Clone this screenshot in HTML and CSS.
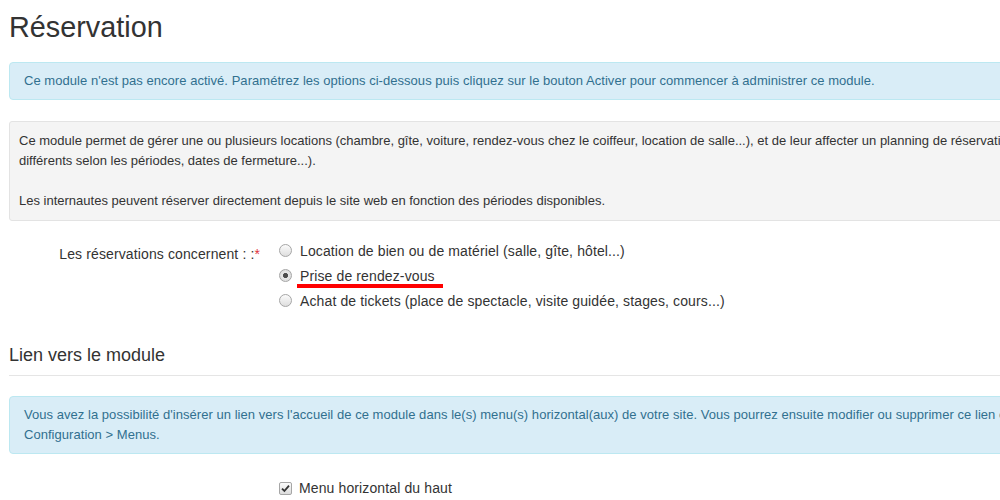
FILE: index.html
```html
<!DOCTYPE html>
<html lang="fr">

<head>
    <meta charset="UTF-8">
    <title>Réservation</title>
    <link rel="stylesheet" href="styles.css">
</head>

<body>
    <div class="page">
        <h1>Réservation</h1>

        <div class="alert">Ce module n'est pas encore activé. Paramétrez les options ci-dessous puis cliquez sur le bouton Activer pour commencer à administrer ce module.</div>

        <div class="well">
            <p>Ce module permet de gérer une ou plusieurs locations (chambre, gîte, voiture, rendez-vous chez le coiffeur, location de salle...), et de leur affecter un planning de réservation (horaires, tarifs<br>différents selon les périodes, dates de fermeture...).</p>
            <p>Les internautes peuvent réserver directement depuis le site web en fonction des périodes disponibles.</p>
        </div>

        <div class="form-row">
            <label class="form-label">Les réservations concernent : :<span class="required">*</span></label>
            <div class="choices">
                <label class="choice"><input type="radio" name="type" value="location"> Location de bien ou de matériel (salle, gîte, hôtel...)</label>
                <label class="choice"><input type="radio" name="type" value="rdv" checked> <span class="marked">Prise de rendez-vous<span class="mark"></span></span></label>
                <label class="choice"><input type="radio" name="type" value="tickets"> Achat de tickets (place de spectacle, visite guidée, stages, cours...)</label>
            </div>
        </div>

        <h3 class="legend">Lien vers le module</h3>

        <div class="alert">Vous avez la possibilité d'insérer un lien vers l'accueil de ce module dans le(s) menu(s) horizontal(aux) de votre site. Vous pourrez ensuite modifier ou supprimer ce lien en passant par le menu<br>Configuration &gt; Menus.</div>

        <div class="form-row checks">
            <div></div>
            <label class="choice">
                <span class="checkbox">
                    <svg width="9" height="9" viewBox="0 0 9 9"><path d="M1 4.6 L3.4 7 L8 1.6" fill="none" stroke="#333" stroke-width="1.8"/></svg>
                </span>
                Menu horizontal du haut
            </label>
        </div>
    </div>
</body>

</html>
```

FILE: styles.css
```css
    body {
        font-family: "Liberation Sans", Arial, sans-serif;
        font-size: 14px;
        line-height: 20px;
        color: #333333;
        margin: 0;
        padding: 0;
        background-color: #ffffff;
        overflow: hidden;
    }

    .page {
        width: 1160px;
        padding-left: 9px;
    }

    h1 {
        font-size: 28.8px;
        font-weight: normal;
        line-height: 32px;
        margin: 11px 0 19px 0;
    }

    .alert {
        font-size: 13px;
        line-height: 20px;
        letter-spacing: 0.04px;
        padding: 8px 14px;
        margin-bottom: 21px;
        color: #31708f;
        background-color: #d9edf7;
        border: 1px solid #bce8f1;
        border-radius: 4px;
    }

    .well {
        font-size: 13px;
        line-height: 20px;
        padding: 9px;
        background-color: #f4f4f4;
        border: 1px solid #e3e3e3;
        border-radius: 3px;
    }

    .well p {
        margin: 0;
    }

    .well p + p {
        margin-top: 20px;
    }

    .form-row {
        display: grid;
        grid-template-columns: 251px 1fr;
        column-gap: 19px;
        margin-top: 20px;
        letter-spacing: 0.12px;
    }

    .form-label {
        text-align: right;
        padding-top: 3px;
    }

    .required {
        color: #e0323c;
    }

    .choices {
        display: flex;
        flex-direction: column;
        gap: 5px;
    }

    .choice {
        display: flex;
        align-items: flex-start;
        white-space: nowrap;
    }

    .choice input {
        -webkit-appearance: none;
        appearance: none;
        width: 13px;
        height: 13px;
        margin: 3px 8px 0 0;
        border: 1px solid #a6a6a6;
        border-radius: 50%;
        background: linear-gradient(#fbfbfb, #dedede);
        box-sizing: border-box;
    }

    .choice input:checked {
        background: radial-gradient(circle, #4d4d4d 0, #4d4d4d 2.2px, #e8e8e8 2.9px, #d6d6d6 100%);
    }

    .marked {
        position: relative;
    }

    .mark {
        position: absolute;
        left: -3px;
        right: -8px;
        top: 18px;
        height: 4px;
        background-color: #ff0000;
    }

    .legend {
        font-size: 18px;
        font-weight: normal;
        line-height: 20px;
        margin: 34px 0 20px 0;
        padding-bottom: 10px;
        border-bottom: 1px solid #e5e5e5;
    }

    .checks {
        margin-top: 24px;
    }

    .checkbox {
        display: inline-flex;
        align-items: center;
        justify-content: center;
        width: 13px;
        height: 13px;
        margin: 4px 7px 0 0;
        border: 1px solid #a6a6a6;
        border-radius: 2px;
        background: linear-gradient(#fbfbfb, #dcdcdc);
        box-sizing: border-box;
    }
```
